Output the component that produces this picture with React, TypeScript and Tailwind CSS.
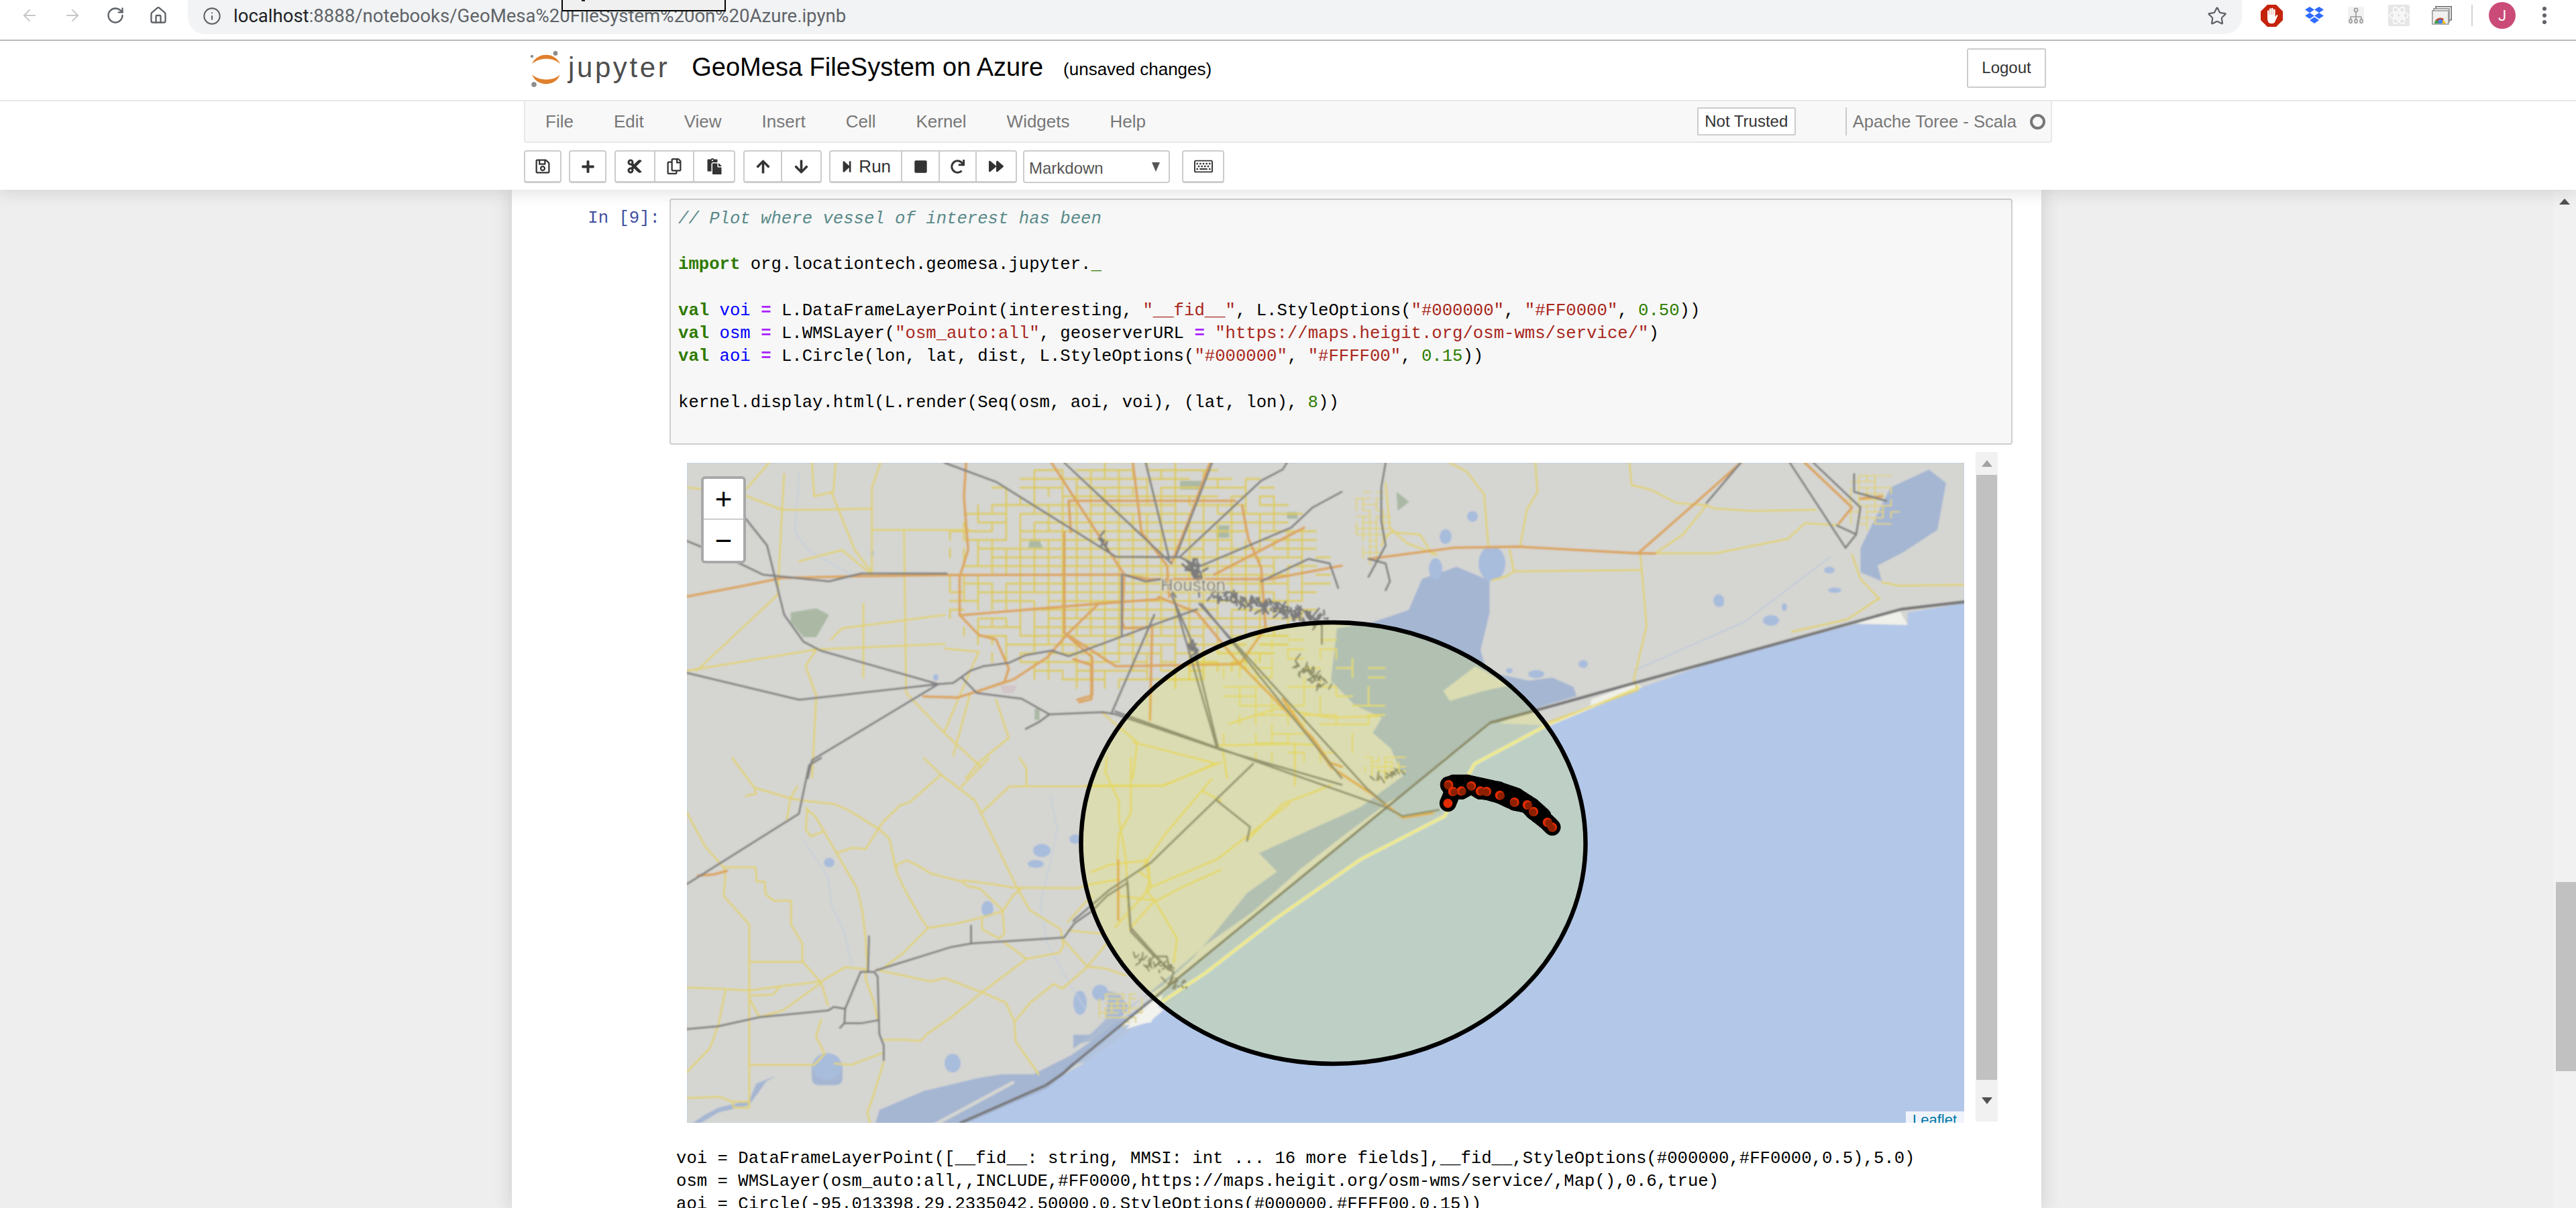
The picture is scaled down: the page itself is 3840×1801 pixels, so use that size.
import React from "react";
import { ArrowLeft, ArrowRight, RotateCw, Home, Info, Star } from "lucide-react";
import {
  FaRegSave, FaPlus, FaCut, FaRegCopy, FaPaste, FaArrowUp, FaArrowDown,
  FaStepForward, FaStop, FaRedo, FaForward, FaRegKeyboard,
} from "react-icons/fa";

type ZoneKey = "a" | "b" | "c" | "d";
const ZONES: Record<ZoneKey, [number, number, number, number]> = {
  a: [1000, 660, 1.568, 3],
  b: [2040, 660, 1.568, 3],
  c: [1600, 900, 1.12, 2.178],
  d: [1020, 1130, 1.96, 2.82],
};
function pts(z: ZoneKey, p: number[]) {
  const [x0, y0, sx, sy] = ZONES[z];
  const out: string[] = [];
  for (let i = 0; i < p.length; i += 2) {
    out.push(`${(x0 + p[i] / sx).toFixed(1)} ${(y0 + p[i + 1] / sy).toFixed(1)}`);
  }
  return out;
}
const line = (z: ZoneKey, p: number[]) => "M" + pts(z, p).join("L");
const poly = (z: ZoneKey, p: number[]) => "M" + pts(z, p).join("L") + "Z";

const YELLOW: [ZoneKey, number[]][] = [
  ["a", [230, 90, 165, 230, 260, 300, 350, 300, 470, 295]],
  ["a", [385, 90, 380, 220, 335, 240, 330, 90]],
  ["a", [490, 90, 470, 200, 470, 590]],
  ["a", [375, 220, 430, 480, 470, 580]],
  ["a", [38, 1020, 340, 925, 640, 900]],
  ["a", [250, 680, 60, 1020]],
  ["a", [340, 925, 315, 1000, 340, 1130, 330, 1500]],
  ["a", [375, 880, 400, 830, 640, 770]],
  ["a", [470, 390, 700, 390]],
  ["a", [545, 390, 550, 1120, 640, 1300, 725, 1450]],
  ["a", [450, 720, 450, 1050]],
  ["a", [300, 530, 400, 480, 470, 590]],
  ["a", [265, 140, 260, 300, 250, 680]],
  ["a", [40, 200, 170, 230]],
  ["a", [640, 920, 720, 935, 700, 1020, 640, 1290]],
  ["a", [700, 1120, 660, 1400]],
  ["a", [790, 1320, 720, 1430, 690, 1500]],
  ["a", [790, 1320, 760, 1150]],
  ["a", [1010, 1210, 1090, 1340, 1080, 1500]],
  ["a", [1290, 1370, 1300, 1500]],
  ["b", [390, 90, 395, 220, 370, 300, 355, 460]],
  ["b", [190, 90, 230, 130, 270, 230, 280, 460]],
  ["b", [610, 90, 615, 190, 660, 210, 720, 270, 790, 280, 810, 295, 900, 305, 1045, 300]],
  ["b", [790, 280, 735, 410, 670, 495]],
  ["b", [670, 495, 810, 495, 980, 430, 1020, 360, 1100, 370]],
  ["b", [635, 495, 640, 600, 650, 820, 620, 1060, 630, 1105, 515, 1185, 420, 1250]],
  ["b", [340, 575, 635, 570]],
  ["b", [330, 480, 340, 575, 320, 600, 290, 615]],
  ["b", [1190, 700, 1120, 790, 990, 845]],
  ["b", [1130, 500, 1150, 610, 1195, 700]],
  ["b", [1200, 625, 1240, 640, 1392, 635]],
  ["b", [150, 500, 120, 410, 50, 400, 30, 460]],
  ["b", [40, 180, 50, 380, 90, 450, 160, 500]],
  ["d", [140, 0, 205, 125, 210, 150, 180, 160]],
  ["d", [205, 125, 310, 170, 350, 180, 440, 195, 480, 220, 570, 300, 600, 340, 620, 480, 650, 570, 690, 670, 712, 715, 800, 695, 870, 670, 930, 645, 960, 580, 985, 550]],
  ["d", [330, 120, 310, 170, 300, 260]],
  ["d", [355, 210, 385, 250, 445, 400, 505, 550, 520, 640, 530, 760, 535, 890]],
  ["d", [360, 215, 355, 300, 370, 330, 405, 310]],
  ["d", [445, 400, 490, 378, 530, 383, 580, 270, 630, 200, 660, 185, 750, 70]],
  ["d", [700, 0, 750, 70, 850, 180, 970, 540, 1010, 640, 1100, 720, 1108, 790, 1095, 820, 1000, 845, 930, 770]],
  ["d", [810, 120, 890, 0]],
  ["d", [870, 228, 950, 120, 1000, 120, 1000, 45, 980, 0]],
  ["d", [950, 120, 1140, 120, 1400, 118, 1540, 30, 1568, 20]],
  ["d", [620, 480, 620, 450, 650, 430, 680, 450, 720, 485, 810, 520, 830, 540, 865, 550, 930, 640, 935, 740, 920, 760, 870, 720, 870, 680]],
  ["d", [815, 515, 900, 530, 960, 545, 1150, 548, 1190, 530, 1270, 510]],
  ["d", [8, 230, 60, 370, 115, 460, 120, 500, 115, 580, 190, 700, 190, 1470]],
  ["d", [115, 460, 208, 460, 212, 520, 235, 520, 238, 575, 262, 600, 312, 600, 312, 700, 345, 780, 345, 855, 400, 945, 420, 1040]],
  ["d", [190, 857, 345, 857]],
  ["d", [8, 965, 100, 970, 190, 978, 280, 960, 400, 940, 470, 880, 535, 888]],
  ["d", [190, 1000, 260, 995, 280, 960]],
  ["d", [120, 980, 100, 1120, 75, 1220, 8, 1320]],
  ["d", [190, 1010, 220, 1090, 290, 1060, 400, 945]],
  ["d", [560, 890, 720, 940, 760, 925, 870, 985, 940, 1030, 965, 1110, 968, 1190, 1035, 1330]],
  ["d", [580, 885, 640, 820, 712, 715]],
  ["d", [870, 985, 1000, 845]],
  ["d", [870, 985, 780, 1090, 710, 1160, 690, 1190, 645, 1185, 583, 1185]],
  ["d", [965, 1110, 1010, 1030, 1080, 950, 1105, 970, 1178, 878, 1105, 760]],
  ["d", [1178, 878, 1240, 770]],
  ["d", [1178, 878, 1230, 885, 1290, 915]],
  ["d", [400, 1100, 385, 1170, 410, 1245, 380, 1290, 190, 1290]],
  ["d", [440, 1285, 490, 1290, 580, 1240]],
  ["d", [583, 1280, 550, 1430, 535, 1490, 545, 1551]],
  ["d", [8, 1430, 105, 1425, 140, 1445, 190, 1445]],
  ["d", [140, 1445, 145, 1470, 190, 1470]],
  ["d", [530, 890, 530, 930, 555, 1030, 565, 1100]],
  ["d", [1235, 0, 1230, 60, 1270, 180, 1270, 260, 1290, 420, 1300, 700]],
  ["d", [1305, 0, 1305, 230, 1270, 320, 1265, 430]],
  ["d", [1190, 480, 1240, 450, 1355, 430, 1360, 510, 1350, 560, 1375, 600, 1440, 760, 1430, 860]],
  ["d", [1400, 330, 1330, 480, 1360, 510]],
  ["d", [1270, 580, 1380, 600, 1460, 540, 1568, 470]],
  ["d", [1400, 330, 1540, 90]],
  ["d", [1515, 140, 1568, 180]],
  ["d", [1120, 690, 1190, 580]],
  ["d", [1120, 725, 1230, 740]],
  ["d", [1375, 600, 1300, 720]],
  ["c", [100, 450, 240, 520, 150, 590, 20, 590]],
  ["c", [240, 460, 370, 455, 410, 460]],
  ["c", [370, 455, 370, 590]],
  ["c", [360, 650, 300, 740, 240, 830, 130, 920]],
  ["c", [120, 830, 130, 920, 70, 1050]],
  ["c", [260, 390, 340, 340, 430, 370, 510, 365]],
  ["c", [430, 590, 350, 650, 290, 770]],
];

const ORANGE: [ZoneKey, number[]][] = [
  ["a", [38, 688, 170, 640, 260, 605, 440, 597, 640, 592, 1060, 590]],
  ["a", [690, 90, 685, 240, 695, 480, 675, 600, 675, 770, 720, 860, 760, 880, 790, 1010, 780, 1070, 720, 1110, 670, 1140, 590, 1135]],
  ["a", [675, 772, 1000, 720, 1140, 700]],
  ["a", [920, 400, 920, 850, 1000, 950, 1040, 1000, 1330, 990]],
  ["a", [890, 90, 1060, 590, 1055, 800, 1060, 830, 1120, 825]],
  ["a", [1080, 90, 1100, 400, 1160, 550, 1165, 690]],
  ["a", [1260, 90, 1210, 350, 1170, 540]],
  ["a", [930, 260, 1320, 260]],
  ["a", [930, 260, 935, 400]],
  ["a", [1050, 590, 1120, 610, 1320, 610, 1400, 610, 1568, 550]],
  ["a", [1140, 690, 1230, 760, 1320, 970, 1500, 1320, 1540, 1430, 1568, 1450]],
  ["a", [1125, 825, 1120, 1240]],
  ["a", [1000, 720, 925, 860, 880, 960, 800, 1060, 720, 1110]],
  ["a", [925, 860, 985, 960, 985, 1130, 950, 1150]],
  ["a", [1480, 380, 1270, 590]],
  ["a", [1335, 280, 1350, 430, 1380, 560, 1390, 830, 1330, 990]],
  ["c", [350, 310, 430, 530, 500, 620, 550, 695, 600, 680]],
  ["c", [0, 180, 30, 200, 30, 310, 10, 320]],
  ["b", [0, 520, 200, 470, 350, 465, 630, 495, 670, 495]],
  ["b", [630, 495, 770, 260, 870, 90]],
  ["b", [1020, 90, 1130, 290, 1100, 360]],
  ["b", [1150, 250, 1200, 240]],
  ["d", [40, 495, 85, 490, 125, 475]],
  ["d", [1268, 430, 1268, 680]],
];

const GRAY: [ZoneKey, number[]][] = [
  ["a", [640, 90, 760, 175, 1040, 510, 1190, 512, 1230, 550]],
  ["a", [38, 440, 70, 465]],
  ["a", [175, 340, 225, 460, 265, 770, 310, 890, 350, 930, 625, 1080]],
  ["a", [150, 530, 215, 590, 370, 620, 445, 585, 645, 585]],
  ["a", [38, 1030, 300, 1150, 625, 1080, 660, 1075, 700, 1020, 730, 1000, 790, 985, 830, 950, 890, 930, 930, 955, 1120, 820, 1230, 745]],
  ["a", [320, 1500, 330, 1420, 625, 1080]],
  ["a", [680, 1050, 715, 1120, 820, 1145, 885, 1215, 1010, 1205, 1040, 1215, 1280, 1370, 1568, 1530]],
  ["a", [885, 1215, 860, 1250, 830, 1280]],
  ["a", [920, 90, 1170, 540]],
  ["a", [1110, 90, 1165, 520]],
  ["a", [1265, 90, 1180, 510]],
  ["a", [1440, 90, 1430, 120, 1380, 170, 1190, 510]],
  ["a", [1568, 220, 1500, 290, 1450, 380, 1240, 550]],
  ["a", [1170, 680, 1220, 900, 1280, 1370]],
  ["a", [1240, 720, 1568, 1500]],
  ["a", [1130, 770, 1030, 1210]],
  ["a", [1054, 590, 1054, 860]],
  ["a", [1060, 590, 1110, 620, 1150, 610, 1180, 690]],
  ["a", [1230, 520, 1235, 690]],
  ["a", [1380, 620, 1490, 520, 1540, 540, 1560, 650]],
  ["c", [70, 350, 520, 660, 550, 690, 610, 670]],
  ["c", [210, 0, 490, 600, 520, 650]],
  ["c", [170, 0, 240, 470]],
  ["c", [300, 520, 130, 840, 60, 930, 0, 1030]],
  ["c", [240, 640, 295, 725, 290, 770]],
  ["c", [90, 900, 95, 1050, 150, 1170]],
  ["c", [415, 60, 415, 130]],
  ["b", [985, 90, 1115, 470]],
  ["b", [870, 90, 790, 270]],
  ["b", [1040, 90, 1150, 290, 1140, 410, 1115, 470]],
  ["b", [1095, 370, 1140, 410]],
  ["b", [1135, 140, 1135, 220, 1210, 260]],
  ["b", [40, 90, 30, 200, 30, 350, 40, 460, 0, 600]],
  ["b", [0, 520, 40, 540, 50, 620, 40, 660]],
  ["d", [8, 530, 335, 235, 340, 200, 365, 30, 400, 0]],
  ["d", [8, 1140, 100, 1128, 220, 1090, 420, 1062, 437, 1047, 470, 1055, 515, 900, 555, 900, 565, 920, 570, 1160, 583, 1210, 583, 1270]],
  ["d", [470, 1055, 468, 1115, 455, 1135]],
  ["d", [468, 1115, 520, 1115, 565, 1103]],
  ["d", [540, 750, 537, 895]],
  ["d", [560, 893, 780, 795, 840, 780, 1110, 755, 1140, 695, 1190, 645, 1235, 580, 1295, 525]],
  ["d", [838, 780, 838, 705]],
  ["d", [1295, 525, 1305, 730, 1370, 830, 1430, 900, 1415, 960]],
  ["d", [1375, 835, 1410, 835, 1415, 870, 1430, 885]],
];

function rng(seed: number) {
  let s = seed;
  return () => {
    s = (s * 1664525 + 1013904223) % 4294967296;
    return s / 4294967296;
  };
}

function cityGrid(cx: number, cy: number, rx: number, ry: number, dx: number, dy: number, prob: number, seed: number) {
  const r = rng(seed);
  let out = "";
  for (let y = cy - ry; y <= cy + ry; y += dy) {
    for (let x = cx - rx; x <= cx + rx; x += dx) {
      const n = ((x - cx) / rx) ** 2 + ((y - cy) / ry) ** 2;
      if (n > 1) continue;
      if (r() < prob * (1.15 - n * 0.6)) out += `M${x} ${y}h${dx}`;
      if (r() < prob * (1.15 - n * 0.6)) out += `M${x} ${y}v${dy}`;
    }
  }
  return out;
}

function scribble(x0: number, y0: number, x1: number, y1: number, n: number, amp: number, seed: number) {
  const r = rng(seed);
  let out = "";
  for (let i = 0; i < n; i++) {
    const t = i / n;
    const x = x0 + (x1 - x0) * t + (r() - 0.5) * amp;
    const y = y0 + (y1 - y0) * t + (r() - 0.5) * amp;
    out += `M${x.toFixed(1)} ${y.toFixed(1)}l${((r() - 0.5) * 14).toFixed(1)} ${((r() - 0.5) * 18).toFixed(1)}`;
  }
  return out;
}

const WATER_BLOBS: [number, number, number, number][] = [
  [1553, 1268, 13, 10], [1544, 1288, 12, 6], [1603, 1251, 9, 7], [1472, 1355, 9, 12], [1236, 1286, 8, 7],
  [1233, 1590, 22, 20], [1420, 1585, 12, 14], [1610, 1495, 10, 18], [1640, 1480, 12, 12],
  [2224, 840, 20, 26], [2140, 848, 10, 16], [2195, 770, 8, 8], [2155, 800, 9, 11], [2562, 895, 8, 9],
  [2640, 925, 12, 8], [2563, 900, 7, 5], [2727, 850, 8, 5], [2735, 880, 10, 4], [2660, 905, 4, 6],
  [2360, 990, 7, 6], [2290, 1005, 12, 6], [2250, 1000, 5, 4], [1300, 825, 3, 5], [1395, 1010, 4, 5],
];

const TRACK = [
  [942, 340], [920, 318], [858, 270], [830, 240], [773, 228], [707, 197], [648, 180], [620, 178], [580, 155],
  [535, 178], [478, 150], [497, 180], [475, 233],
];
const TRACK_TOP = [[500, 142], [560, 142], [620, 155], [700, 172], [780, 200], [850, 245], [900, 290]];

function MapDrawing() {
  const dots: number[][] = [];
  for (const [list] of [[TRACK], [TRACK_TOP]] as number[][][][]) {
    for (let i = 0; i < list.length - 1; i++) {
      for (let k = 0; k <= 6; k++) {
        const t = k / 6;
        dots.push([list[i][0] + (list[i + 1][0] - list[i][0]) * t, list[i][1] + (list[i + 1][1] - list[i][1]) * t]);
      }
    }
  }
  const land = "M1024 690H2928V899" +
    pts("b", [1392, 718, 1260, 760, 1260, 815, 1140, 810, 820, 970, 630, 1100, 420, 1250])
      .map((s) => "L" + s).join("") +
    pts("c", [790, 395, 680, 510, 620, 680, 480, 830, 340, 1020, 220, 1200, 165, 1290, 20, 1490])
      .map((s) => "L" + s).join("") +
    "L1559 1618L1432 1674H1024Z";
  return (
    <svg width="1904" height="984" viewBox="1024 690 1904 984" className="block" fill="none" strokeLinejoin="round" strokeLinecap="round">
      <defs>
        <filter id="soft" x="0" y="0" width="1" height="1">
          <feGaussianBlur stdDeviation="0.8" />
        </filter>
      </defs>
      <rect x="1024" y="690" width="1904" height="984" fill="#b3c7e8" />
      <g filter="url(#soft)">
        <path d={land} fill="#d5d6d2" />
        <path d={poly("c", [582, -80, 640, -120, 695, -75, 695, 30, 680, 150, 690, 220, 760, 250, 800, 240, 835, 270, 840, 300, 780, 335, 700, 395, 620, 500, 580, 590, 530, 640, 460, 740, 380, 860, 300, 1000, 220, 1110, 160, 1210, 110, 1290, 60, 1360, 0, 1445, 0, 1400, 30, 1400, 100, 1300, 150, 1240, 200, 1150, 240, 1060, 290, 940, 340, 870, 310, 810, 400, 730, 480, 660, 550, 560, 530, 470, 500, 420, 515, 370, 470, 330, 430, 250, 440, 80, 500, 60, 560, 20])} fill="#a5b6d2" />
        <path d={poly("b", [175, 1110, 250, 1000, 330, 1085, 270, 1110, 190, 1155])} fill="#d5d6d2" />
        <path d={poly("c", [695, 388, 0, 1495, 20, 1490, 165, 1290, 340, 1020, 480, 830, 620, 680, 680, 510, 790, 395])} fill="#b2c4de" />
        <path d={poly("d", [555, 1551, 570, 1480, 700, 1400, 860, 1345, 930, 1330, 1020, 1330, 1130, 1250, 1200, 1180, 1260, 1110, 1310, 1070, 1370, 1000, 1270, 1140, 1060, 1390, 800, 1551])} fill="#a5b6d2" />
        <path d={line("d", [720, 1551, 960, 1365])} stroke="#d5d6d2" strokeWidth="5" />
        <path d={poly("b", [1150, 470, 1220, 200, 1310, 120, 1350, 180, 1330, 390, 1250, 490, 1190, 550, 1200, 620, 1150, 580])} fill="#a5b6d2" />
        <path d={poly("d", [30, 1551, 100, 1490, 190, 1460, 240, 1360, 270, 1335, 210, 1370, 190, 1440, 100, 1470, 60, 1500, 8, 1551])} fill="#a5b6d2" />
        <path d={poly("d", [1160, 1200, 1230, 1100, 1240, 980, 1270, 990, 1300, 1050, 1250, 1140, 1190, 1190])} fill="#a5b6d2" opacity="0.85" />
        <rect x="1210" y="1580" width="46" height="38" rx="10" fill="#a5b6d2" />
        <path d={poly("c", [150, 1270, 115, 1310, 80, 1370, 130, 1360])} fill="#eff0ea" />
        <path d={poly("b", [1140, 810, 1240, 745, 1260, 815])} fill="#eff0ea" />
        <path d={poly("b", [520, 1150, 630, 1070, 630, 1100, 520, 1180])} fill="#eff0ea" />
        <path d={poly("d", [1290, 1140, 1370, 1030, 1400, 1060, 1360, 1110])} fill="#f2f3ee" />
        <path d={line("c", [150, 1290, 220, 1200, 340, 1020, 480, 830, 620, 690, 670, 520, 790, 395, 945, 270])} stroke="#eef0d8" strokeWidth="5" />
        {WATER_BLOBS.map((b, i) => (
          <ellipse key={i} cx={b[0]} cy={b[1]} rx={b[2]} ry={b[3]} fill="#a8bcdc" />
        ))}
        <path d={line("b", [880, 800, 1080, 510])} stroke="#b8c7dc" strokeWidth="1.5" />
        <path d={line("b", [620, 1020, 880, 800])} stroke="#b8c7dc" strokeWidth="1.5" />
        <path d={line("d", [350, 350, 420, 500, 430, 620, 465, 720, 490, 870])} stroke="#c3cedd" strokeWidth="1.5" />
        <path d={line("d", [1070, 160, 1090, 300, 1060, 500, 1040, 620, 1060, 780, 1130, 960, 1170, 1050])} stroke="#c3cedd" strokeWidth="1.5" />
        <path d={line("a", [300, 130, 290, 400, 320, 480, 430, 600])} stroke="#c3cedd" strokeWidth="1.5" />
        <path d={poly("a", [280, 760, 340, 740, 370, 770, 340, 870, 310, 870, 280, 800])} fill="#abb9a4" />
        <path d={poly("a", [840, 430, 860, 430, 870, 470, 835, 470])} fill="#abb9a4" />
        <path d={poly("a", [1275, 370, 1305, 370, 1305, 425, 1275, 425])} fill="#abb9a4" />
        <path d={poly("a", [1190, 170, 1240, 170, 1240, 210, 1190, 210])} fill="#abb9a4" />
        <path d={poly("a", [1440, 310, 1465, 310, 1465, 340, 1440, 340])} fill="#abb9a4" />
        <path d={poly("a", [850, 1190, 862, 1190, 862, 1240, 850, 1240])} fill="#abb9a4" />
        <path d={poly("a", [770, 1085, 810, 1085, 800, 1120, 775, 1120])} fill="#d2c6c8" />
        <path d={poly("b", [65, 220, 80, 240, 95, 265, 68, 305])} fill="#abb9a4" />
        <path d={cityGrid(1680, 850, 285, 175, 21, 13, 0.95, 7)} stroke="#dccb62" strokeWidth="2.8" />
        <path d={cityGrid(1930, 1040, 130, 100, 24, 14, 0.4, 13)} stroke="#dfd27b" strokeWidth="2.4" />
        <path d={cityGrid(2785, 745, 38, 45, 12, 9, 0.75, 21)} stroke="#dfd27b" strokeWidth="2.2" />
        <path d={cityGrid(1670, 1500, 40, 25, 9, 7, 0.65, 31)} stroke="#dfd27b" strokeWidth="2.2" />
        <path d={cityGrid(2060, 1140, 35, 18, 10, 7, 0.7, 41)} stroke="#dfd27b" strokeWidth="2.2" />
        <path d={cityGrid(2040, 780, 28, 55, 10, 9, 0.7, 51)} stroke="#dfd27b" strokeWidth="2.2" />
        {YELLOW.map(([z, p], i) => (
          <path key={"y" + i} d={line(z, p)} stroke="#e0d27a" strokeWidth="3" />
        ))}
        <path d={line("c", [150, 1290, 220, 1200, 340, 1020, 480, 830, 620, 690, 670, 520, 790, 395, 945, 270])} stroke="#ecdf86" strokeWidth="2.4" />
        {ORANGE.map(([z, p], i) => (
          <path key={"o" + i} d={line(z, p)} stroke="#dba65f" strokeWidth="3.8" />
        ))}
        {GRAY.map(([z, p], i) => (
          <path key={"g" + i} d={line(z, p)} stroke="#828282" strokeWidth="3" />
        ))}
        <path d={scribble(1810, 885, 1975, 925, 150, 16, 3)} stroke="#7c7c7c" strokeWidth="3" />
        <path d={scribble(1775, 840, 1790, 860, 30, 16, 5)} stroke="#7c7c7c" strokeWidth="3.4" />
        <path d={scribble(1640, 800, 1650, 812, 8, 8, 6)} stroke="#7c7c7c" strokeWidth="3" />
        <path d={scribble(1778, 960, 1780, 975, 10, 8, 8)} stroke="#7c7c7c" strokeWidth="3" />
        <path d={scribble(1935, 990, 1975, 1025, 40, 14, 9)} stroke="#7c7c7c" strokeWidth="2.5" />
        <path d={scribble(1695, 1430, 1745, 1445, 30, 12, 11)} stroke="#7c7c7c" strokeWidth="2.5" />
        <path d={scribble(1740, 1465, 1770, 1470, 14, 8, 12)} stroke="#7c7c7c" strokeWidth="2.5" />
        <path d={scribble(2050, 1162, 2090, 1150, 14, 6, 15)} stroke="#7c7c7c" strokeWidth="2.5" />
        <path d={line("b", [1392, 712, 1245, 745, 395, 1195, 285, 1252])} stroke="#787878" strokeWidth="4.5" />
        <path d={line("c", [695, 388, 0, 1495])} stroke="#787878" strokeWidth="3.5" />
        <path d="M1600 1586L1585 1600L1559 1618L1432 1674" stroke="#787878" strokeWidth="4" />
        <text x="1730" y="881" fontFamily="Liberation Sans, sans-serif" fontSize="26" fill="#7d7d7d" stroke="#e6e2c8" strokeWidth="3" paintOrder="stroke">Houston</text>
      </g>
      <ellipse cx="1987.5" cy="1257" rx="376" ry="329" fill="#ffff00" fillOpacity="0.15" stroke="#000000" strokeWidth="6.5" />
      {dots.map((d, i) => (
        <circle key={"t" + i} cx={2000 + d[0] / 3} cy={1120 + d[1] / 3} r="12.5" fill="#000000" />
      ))}
      {TRACK.map((d, i) => (
        <g key={"r" + i}>
          <circle cx={2000 + d[0] / 3} cy={1120 + d[1] / 3} r="7" fill="#e22b00" />
          {i !== TRACK.length - 1 && <circle cx={2000 + d[0] / 3 + (i % 2 ? 2 : -1)} cy={1120 + d[1] / 3 + 1} r="5.5" fill="#7d1e00" opacity="0.85" />}
        </g>
      ))}
    </svg>
  );
}

function JupyterLogo() {
  return (
    <svg width="56" height="60" viewBox="0 0 56 60" className="shrink-0">
      <path d="M3 20.5 C10 2 38 2 45 20.5 C36 10 13 10 3 20.5Z" fill="#e07f2c" />
      <path d="M3 36 C10 55 38 55 45 36 C36 46 13 46 3 36Z" fill="#e07f2c" />
      <circle cx="38" cy="4.5" r="3.4" fill="#8e8e8e" />
      <circle cx="3" cy="9" r="2.2" fill="#8e8e8e" />
      <circle cx="6" cy="51" r="3.8" fill="#8e8e8e" />
    </svg>
  );
}

function Seg({ w, last, children }: { w: string; last?: boolean; children: React.ReactNode }) {
  return (
    <div className={`${w} h-full flex items-center justify-center text-[#333333] ${last ? "" : "border-r-2 border-[#cccccc]"}`}>
      {children}
    </div>
  );
}
function Group({ w, children }: { w: string; children: React.ReactNode }) {
  return (
    <div className={`${w} h-[49px] flex border-2 border-b-[3px] border-[#cccccc] rounded-[4px] bg-white overflow-hidden`}>{children}</div>
  );
}

function Extensions() {
  return (
    <div className="flex items-center ml-[28px]">
      <svg width="33" height="33" viewBox="0 0 33 33">
        <path d="M10 0H23L33 10V23L23 33H10L0 23V10Z" fill="#c4230c" />
        <path d="M10 20V9.5a1.3 1.3 0 0 1 2.6 0V15h.4V6.5a1.3 1.3 0 0 1 2.6 0V15h.4V6a1.3 1.3 0 0 1 2.6 0V15h.4V8a1.3 1.3 0 0 1 2.6 0v10l2-2.5c1-1 2.4 0 1.6 1.2L21 26c-1 1.4-2.5 2-4 2h-2c-3 0-5-3-5-8Z" fill="#ffffff" />
      </svg>
      <svg width="28" height="26" viewBox="0 0 28 26" className="ml-[33px]" fill="#2f6bff">
        <path d="M7 0l7 4.5L7 9 0 4.5Z M21 0l7 4.5L21 9l-7-4.5Z M7 9l7 4.5L7 18l-7-4.5Z M21 9l7 4.5L21 18l-7-4.5Z M14 15.5l7 4.5-7 5-7-5Z" />
      </svg>
      <svg width="24" height="26" viewBox="0 0 24 26" className="ml-[36px]" fill="none" stroke="#9a9a9a" strokeWidth="1.6">
        <rect x="0" y="0" width="24" height="26" rx="4" fill="#f2f2f2" stroke="none" />
        <circle cx="12" cy="5" r="2.6" />
        <path d="M12 8v7M4 15h16M4 15v4M12 15v4M20 15v4" />
        <ellipse cx="4" cy="21.5" rx="2" ry="2.6" />
        <ellipse cx="12" cy="21.5" rx="2" ry="2.6" />
        <ellipse cx="20" cy="21.5" rx="2" ry="2.6" />
      </svg>
      <svg width="32" height="32" viewBox="0 0 32 32" className="ml-[36px]" fill="none" stroke="#ffffff" strokeWidth="1.4">
        <rect width="32" height="32" rx="2" fill="#e6e6e6" stroke="none" />
        <ellipse cx="16" cy="16" rx="14" ry="5.4" />
        <ellipse cx="16" cy="16" rx="14" ry="5.4" transform="rotate(60 16 16)" />
        <ellipse cx="16" cy="16" rx="14" ry="5.4" transform="rotate(120 16 16)" />
        <circle cx="16" cy="16" r="3" />
      </svg>
      <svg width="30" height="28" viewBox="0 0 30 28" className="ml-[33px]">
        <rect x="6" y="0.8" width="23.2" height="20" fill="#ffffff" stroke="#6f6f6f" strokeWidth="1.6" />
        <rect x="3" y="4" width="23" height="20" fill="#ffffff" stroke="#8a8a8a" strokeWidth="1.6" />
        <rect x="0.8" y="7" width="24" height="20" fill="#f0f0f0" stroke="#9a9a9a" strokeWidth="1.6" />
        <path d="M4 26a9 9 0 0 1 17 0Z" fill="#fbbc05" />
        <path d="M4 26a9 9 0 0 1 14-7l-4 7Z" fill="#c5442f" />
        <path d="M4 26a6 6 0 0 1 5-5l1 5Z" fill="#34a853" />
        <circle cx="13" cy="23" r="3.2" fill="#4285f4" />
      </svg>
      <div className="w-[2px] h-[32px] bg-[#d4d4d4] ml-[29px]" />
      <div className="w-[40px] h-[40px] rounded-full bg-[#cb4b78] ml-[24px] flex items-center justify-center text-white text-[22px] font-['Roboto']">J</div>
      <svg width="8" height="28" viewBox="0 0 8 28" className="ml-[39px]" fill="#5f6368">
        <circle cx="4" cy="4" r="3" />
        <circle cx="4" cy="14" r="3" />
        <circle cx="4" cy="24" r="3" />
      </svg>
    </div>
  );
}

const K = ({ children }: { children: React.ReactNode }) => <span className="text-[#2f7a00] font-bold">{children}</span>;
const V = ({ children }: { children: React.ReactNode }) => <span className="text-[#0000ff]">{children}</span>;
const O = () => <span className="text-[#aa22ff] font-bold">=</span>;
const S = ({ children }: { children: React.ReactNode }) => <span className="text-[#a8281c]">{children}</span>;
const N = ({ children }: { children: React.ReactNode }) => <span className="text-[#2d7d00]">{children}</span>;

export default function App() {
  return (
    <div className="w-[3840px] h-[1801px] flex flex-col overflow-hidden bg-[#eeeeee] font-['Liberation_Sans',sans-serif] relative">
      {/* browser chrome */}
      <div className="h-[61px] shrink-0 bg-white border-b-2 border-[#b8b8b8] flex items-start relative z-20">
        <div className="flex items-center h-[46px] pl-[30px] gap-[36px] text-[#5f6368]">
          <ArrowLeft size={28} strokeWidth={1.6} className="text-[#c4c6c9]" />
          <ArrowRight size={28} strokeWidth={1.6} className="text-[#c4c6c9]" />
          <RotateCw size={28} strokeWidth={2} />
          <Home size={28} strokeWidth={2} />
        </div>
        <div className="ml-[30px] w-[3062px] h-[51px] bg-[#f1f3f4] rounded-b-[26px] flex items-center pl-[22px] pr-[24px]">
          <Info size={28} strokeWidth={1.8} className="text-[#5f6368] shrink-0 -mt-[4px]" />
          <div className="ml-[18px] text-[27.55px] leading-[44px] -mt-[4px] text-[#5f6368] whitespace-nowrap font-['Roboto']">
            <span className="text-[#202124]">localhost</span>:8888/notebooks/GeoMesa%20FileSystem%20on%20Azure.ipynb
          </div>
          <Star size={30} strokeWidth={1.8} className="ml-auto mr-[-2px] text-[#5f6368] -mt-[4px]" />
        </div>
        <div className="h-[46px] flex items-center">
          <Extensions />
        </div>
        <div className="absolute left-[837px] top-0 w-[245px] h-[17px] bg-[#f0f0f0] border-x-2 border-b-2 border-black overflow-hidden">
          <div className="absolute left-[28px] -top-[1px] w-[5px] h-[3px] bg-[#222222]" />
        </div>
      </div>

      {/* jupyter header */}
      <div className="shrink-0 bg-white relative z-10 h-[222px] shadow-[0_0_24px_2px_rgba(87,87,87,0.2)]">
        <div className="h-[90px] border-b-2 border-[#e7e7e7] flex items-center pl-[790px] pr-[790px] text-black">
          <JupyterLogo />
          <span className="ml-[1px] text-[42px] tracking-[3.6px] text-[#4e4e4e] -mt-[10px]">jupyter</span>
          <span className="ml-[33px] text-[38px] -mt-[10px]">GeoMesa FileSystem on Azure</span>
          <span className="ml-[30px] text-[26px] -mt-[4px]">(unsaved changes)</span>
          <div className="ml-auto w-[118px] h-[59px] mt-[-8px] border-2 border-[#cccccc] rounded-[3px] flex items-center justify-center text-[24px] text-[#333333]">Logout</div>
        </div>
        <div className="ml-[781px] w-[2278px] h-[62px] bg-[#f8f8f8] border-x-2 border-b-2 border-[#e7e7e7] rounded-b-[4px] flex items-center pl-[30px] gap-[60px] text-[26px] text-[#777777]">
          <span>File</span>
          <span>Edit</span>
          <span>View</span>
          <span>Insert</span>
          <span>Cell</span>
          <span>Kernel</span>
          <span>Widgets</span>
          <span>Help</span>
          <div className="ml-auto flex items-center pr-[8px] text-[26px]">
            <div className="w-[147px] h-[42px] border-2 border-[#cccccc] rounded-[2px] bg-white flex items-center justify-center text-[24px] text-[#333333]">Not Trusted</div>
            <div className="ml-[74px] h-[42px] border-l-2 border-[#cccccc] pl-[9px] flex items-center text-[25.6px] text-[#777777]">Apache Toree - Scala</div>
            <div className="ml-[20px] w-[23px] h-[23px] rounded-full border-[4px] border-[#777777]" />
          </div>
        </div>
        <div className="flex items-center pl-[781px] mt-[11px]">
          <Group w="w-[56px]"><Seg w="w-full" last><FaRegSave size={24} /></Seg></Group>
          <div className="ml-[11px]"><Group w="w-[56px]"><Seg w="w-full" last><FaPlus size={21} /></Seg></Group></div>
          <div className="ml-[12px]">
            <Group w="w-[180px]">
              <Seg w="w-[60px]"><FaCut size={24} /></Seg>
              <Seg w="w-[60px]"><FaRegCopy size={24} /></Seg>
              <Seg w="w-[60px]" last><FaPaste size={24} /></Seg>
            </Group>
          </div>
          <div className="ml-[12px]">
            <Group w="w-[117px]">
              <Seg w="w-[58px]"><FaArrowUp size={23} /></Seg>
              <Seg w="w-[59px]" last><FaArrowDown size={23} /></Seg>
            </Group>
          </div>
          <div className="ml-[11px]">
            <Group w="w-[280px]">
              <Seg w="w-[109px]"><FaStepForward size={19} /><span className="ml-[8px] text-[26px]">Run</span></Seg>
              <Seg w="w-[56px]"><FaStop size={21} /></Seg>
              <Seg w="w-[56px]"><FaRedo size={21} /></Seg>
              <Seg w="w-[59px]" last><FaForward size={22} /></Seg>
            </Group>
          </div>
          <div className="ml-[9px] w-[219px] h-[49px] border-2 border-[#cccccc] rounded-[4px] bg-white flex items-center pl-[7px] pr-[13px] text-[24px] text-[#555555] relative">
            <span className="mt-[4px]">Markdown</span>
            <span className="ml-auto w-0 h-0 border-x-[6px] border-x-transparent border-t-[14px] border-t-[#555555]" />
          </div>
          <div className="ml-[18px]"><Group w="w-[63px]"><Seg w="w-full" last><FaRegKeyboard size={28} /></Seg></Group></div>
        </div>
      </div>

      {/* page */}
      <div className="flex-1 flex min-h-0">
        <div className="w-[763px] shrink-0" />
        <div className="w-[2280px] shrink-0 bg-white shadow-[0_0_24px_2px_rgba(87,87,87,0.2)] font-['Liberation_Mono',monospace] text-[25.65px] leading-[34.2px] text-black overflow-hidden">
          <div className="flex pt-[13px]">
            <div className="w-[235px] shrink-0 text-right pr-[14px] pt-[13px] text-[#3f4f9f]">In [9]:</div>
            <div className="w-[2002px] h-[367px] bg-[#f7f7f7] border-2 border-[#cfcfcf] rounded-[4px] pl-[11px] pt-[12px] whitespace-pre">
              <div className="text-[#5a8a8a] italic">// Plot where vessel of interest has been</div>
              <div>&nbsp;</div>
              <div><K>import</K> org.locationtech.geomesa.jupyter.<K>_</K></div>
              <div>&nbsp;</div>
              <div><K>val</K> <V>voi</V> <O /> L.DataFrameLayerPoint(interesting, <S>"__fid__"</S>, L.StyleOptions(<S>"#000000"</S>, <S>"#FF0000"</S>, <N>0.50</N>))</div>
              <div><K>val</K> <V>osm</V> <O /> L.WMSLayer(<S>"osm_auto:all"</S>, geoserverURL <O /> <S>"https://maps.heigit.org/osm-wms/service/"</S>)</div>
              <div><K>val</K> <V>aoi</V> <O /> L.Circle(lon, lat, dist, L.StyleOptions(<S>"#000000"</S>, <S>"#FFFF00"</S>, <N>0.15</N>))</div>
              <div>&nbsp;</div>
              <div>kernel.display.html(L.render(Seq(osm, aoi, voi), (lat, lon), <N>8</N>))</div>
            </div>
          </div>
          <div className="flex pl-[261px] mt-[11px] gap-[17px]">
            <div className="mt-[16px] relative">
              <MapDrawing />
              <div className="absolute left-[21px] top-[20px] w-[67px] h-[130px] border-4 border-[#a9a9a9] rounded-[6px] bg-white flex flex-col text-black font-['Liberation_Sans']">
                <div className="h-[61px] border-b-2 border-[#cccccc] flex items-center justify-center text-[44px] leading-none">+</div>
                <div className="flex-1 flex items-center justify-center text-[44px] leading-none">−</div>
              </div>
              <div className="absolute right-0 bottom-0 w-[87px] h-[17px] bg-white/80 overflow-hidden pl-[10px] font-['Liberation_Sans'] text-[22px] leading-[26px] text-[#0078a8]">Leaflet</div>
            </div>
            <div className="w-[33px] h-[998px] bg-[#f1f1f1] flex flex-col">
              <div className="h-[34px] shrink-0 flex items-center justify-center">
                <div className="w-0 h-0 border-x-[8px] border-x-transparent border-b-[10px] border-b-[#a3a3a3]" />
              </div>
              <div className="h-[902px] shrink-0 bg-[#c1c1c1] mx-[1px]" />
              <div className="flex-1 flex items-center justify-center">
                <div className="w-0 h-0 border-x-[8px] border-x-transparent border-t-[10px] border-t-[#505050]" />
              </div>
            </div>
          </div>
          <div className="pl-[245px] pt-[37px] whitespace-pre">
            <div>voi = DataFrameLayerPoint([__fid__: string, MMSI: int ... 16 more fields],__fid__,StyleOptions(#000000,#FF0000,0.5),5.0)</div>
            <div>osm = WMSLayer(osm_auto:all,,INCLUDE,#FF0000,https://maps.heigit.org/osm-wms/service/,Map(),0.6,true)</div>
            <div>aoi = Circle(-95.013398,29.2335042,50000.0,StyleOptions(#000000,#FFFF00,0.15))</div>
          </div>
        </div>
        <div className="flex-1" />
        <div className="w-[34px] shrink-0 bg-[#f1f1f1] flex flex-col relative">
          <div className="h-[34px] flex items-center justify-center">
            <div className="w-0 h-0 border-x-[8px] border-x-transparent border-b-[9px] border-b-[#505050]" />
          </div>
          <div className="h-[998px]" />
          <div className="h-[282px] bg-[#c1c1c1] ml-[4px]" />
        </div>
      </div>
    </div>
  );
}
